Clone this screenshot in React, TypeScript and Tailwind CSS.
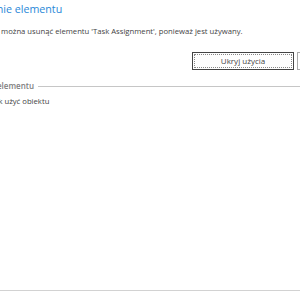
export default function App() {
  return (
    <div className="w-[300px] h-[300px] overflow-hidden bg-white font-['Open_Sans',sans-serif]">
      <div className="w-[340px] flex flex-col">
        <h1 className="-ml-[37px] pt-[1px] h-[20px] text-[10.7px] leading-[16px] text-[#2b88d8] whitespace-nowrap">
          Usuwanie elementu
        </h1>
        <p className="-ml-[13px] mt-[5px] text-[7.7px] leading-[12px] text-[#444] whitespace-nowrap">
          Nie można usunąć elementu 'Task Assignment', ponieważ jest używany.
        </p>
        <div className="flex gap-[3px] mt-[15px] ml-[192px]">
          <button className="w-[102px] h-[18px] border border-[#444] p-[1px] bg-white">
            <span className="flex items-center justify-center h-full border border-dotted border-[#888] text-[8px] text-[#444]">
              Ukryj użycia
            </span>
          </button>
          <button className="w-[40px] h-[18px] border border-[#ababab] bg-white text-[8px] text-[#444]">
            Zamknij
          </button>
        </div>
        <div className="flex items-center mt-[10px] -ml-[30px] gap-[4px]">
          <span className="text-[8px] leading-[12px] font-semibold text-[#808080] whitespace-nowrap">
            Użycia elementu
          </span>
          <div className="flex-1 h-px bg-[#c6c6c6]" />
        </div>
        <p className="-ml-[14px] mt-[3px] text-[7.7px] leading-[12px] text-[#444] whitespace-nowrap">
          Brak użyć obiektu
        </p>
        <div className="mt-[183px] h-px bg-[#d2d2d2]" />
      </div>
    </div>
  );
}
